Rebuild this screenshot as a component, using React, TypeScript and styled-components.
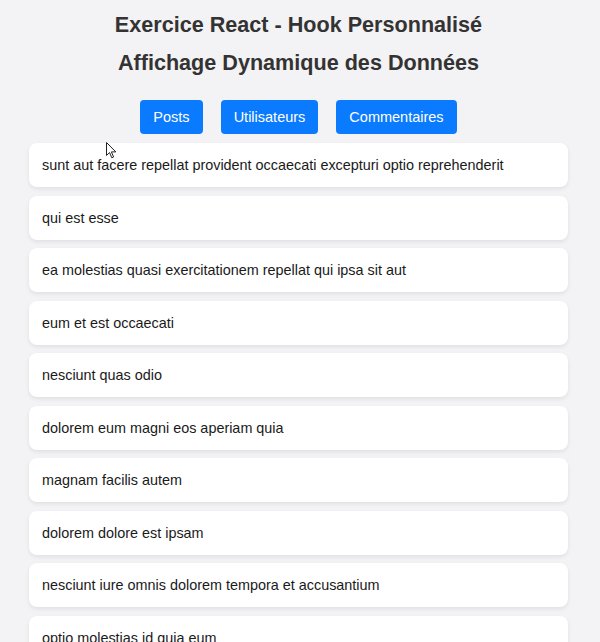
import React from "react";
import styled, { createGlobalStyle } from "styled-components";

const GlobalStyle = createGlobalStyle`
  html, body {
    margin: 0;
    padding: 0;
    background: #f3f2f4;
    font-family: "Liberation Sans", Arial, sans-serif;
    color: #222;
    overflow: hidden;
  }
`;

const Page = styled.div`
  position: relative;
  padding: 0 32px 0 29px;
  display: flex;
  flex-direction: column;
`;

const Title = styled.h1<{ $first?: boolean }>`
  margin: 0;
  text-align: center;
  font-size: 21.6px;
  font-weight: bold;
  color: #333;
  line-height: 38px;
  padding-top: ${(p) => (p.$first ? "6px" : "0")};
`;

const Tabs = styled.div`
  display: flex;
  justify-content: center;
  gap: 18px;
  margin: 18px 0 9px;
`;

const TabButton = styled.button`
  font-family: "Liberation Sans", Arial, sans-serif;
  font-size: 14.5px;
  line-height: 18px;
  padding: 8px 13px;
  border: none;
  border-radius: 4px;
  background: #0a7bff;
  color: #fff;
  cursor: pointer;
`;

const List = styled.ul`
  list-style: none;
  margin: 0;
  padding: 0;
  display: flex;
  flex-direction: column;
  gap: 8.5px;
`;

const Item = styled.li`
  background: #fff;
  border-radius: 8px;
  padding: 13px 13px;
  font-size: 14.4px;
  line-height: 18px;
  color: #1a1a1a;
  box-shadow: 0 2px 4px rgba(0, 0, 0, 0.08);
`;

const Cursor = styled.svg`
  position: absolute;
  left: 106px;
  top: 142px;
  width: 11px;
  height: 17px;
`;

const posts = [
  "sunt aut facere repellat provident occaecati excepturi optio reprehenderit",
  "qui est esse",
  "ea molestias quasi exercitationem repellat qui ipsa sit aut",
  "eum et est occaecati",
  "nesciunt quas odio",
  "dolorem eum magni eos aperiam quia",
  "magnam facilis autem",
  "dolorem dolore est ipsam",
  "nesciunt iure omnis dolorem tempora et accusantium",
  "optio molestias id quia eum",
];

export default function App() {
  return (
    <>
      <GlobalStyle />
      <Page>
        <Title $first>Exercice React - Hook Personnalisé</Title>
        <Title as="h2">Affichage Dynamique des Données</Title>
        <Tabs>
          <TabButton>Posts</TabButton>
          <TabButton>Utilisateurs</TabButton>
          <TabButton>Commentaires</TabButton>
        </Tabs>
        <List>
          {posts.map((p) => (
            <Item key={p}>{p}</Item>
          ))}
        </List>
        <Cursor viewBox="0 0 11 17">
          <path
            d="M0.5 0.5 L0.5 13.5 L3.5 10.5 L5.8 15.8 L7.6 15 L5.4 9.9 L9.8 9.9 Z"
            fill="#fff"
            stroke="#222"
            strokeWidth="1"
            strokeLinejoin="round"
          />
        </Cursor>
      </Page>
    </>
  );
}
